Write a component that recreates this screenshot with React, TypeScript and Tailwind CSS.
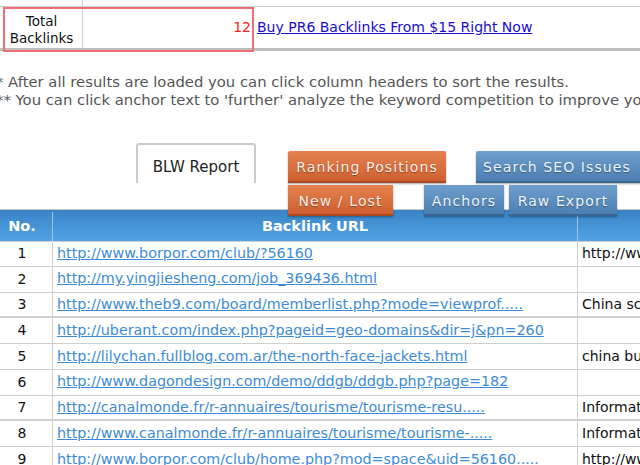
import React from "react";

const rows: { n: number; url: string; anchor: string; thick?: boolean }[] = [
  { n: 1, url: "http://www.borpor.com/club/?56160", anchor: "http://www.borpor.com" },
  { n: 2, url: "http://my.yingjiesheng.com/job_369436.html", anchor: "" },
  { n: 3, url: "http://www.theb9.com/board/memberlist.php?mode=viewprof.....", anchor: "China school uniforms", thick: true },
  { n: 4, url: "http://uberant.com/index.php?pageid=geo-domains&dir=j&pn=260", anchor: "" },
  { n: 5, url: "http://lilychan.fullblog.com.ar/the-north-face-jackets.html", anchor: "china business" },
  { n: 6, url: "http://www.dagondesign.com/demo/ddgb/ddgb.php?page=182", anchor: "" },
  { n: 7, url: "http://canalmonde.fr/r-annuaires/tourisme/tourisme-resu.....", anchor: "Information", thick: true },
  { n: 8, url: "http://www.canalmonde.fr/r-annuaires/tourisme/tourisme-.....", anchor: "Information" },
  { n: 9, url: "http://www.borpor.com/club/home.php?mod=space&uid=56160.....", anchor: "http://www.borpor.com" },
];

const orange =
  "bg-gradient-to-b from-[#e4824f] to-[#cf5f30] border-b-2 border-[#a9491f] text-[#fbeee6] shadow-[0_1px_2px_rgba(0,0,0,0.35)] [text-shadow:0_1px_1px_rgba(0,0,0,0.35)]";
const blue =
  "bg-gradient-to-b from-[#6e9fcc] to-[#4c7fb2] border-b-2 border-[#3a6694] text-[#eef4fa] shadow-[0_1px_2px_rgba(0,0,0,0.35)] [text-shadow:0_1px_1px_rgba(0,0,0,0.35)]";

export default function App() {
  return (
    <div className="relative w-[640px] h-[465px] overflow-hidden bg-white font-['DejaVu_Sans',Verdana,sans-serif] text-[14px]">
      {/* top summary table */}
      <div className="relative">
        <div className="flex h-[7px] border-b border-[#cfcfcf]">
          <div className="w-[83px] shrink-0 border-r border-[#cfcfcf]" />
        </div>
        <div className="flex h-[41px] items-center">
          <div className="w-[83px] shrink-0 h-full border-r border-[#cfcfcf] flex flex-col items-center justify-center pt-[4px] leading-[17px] text-[13.5px] text-[#111] pl-[1px]">
            <span>Total</span>
            <span>Backlinks</span>
          </div>
          <div className="w-[168px] shrink-0 text-right text-[#ff2020]">12</div>
          <a href="#" className="ml-[6px] shrink-0 whitespace-nowrap text-[#1a0dcc] underline">
            Buy PR6 Backlinks From $15 Right Now
          </a>
        </div>
        <div className="h-[3px] bg-[#bdbdbd]" />
        <div className="absolute left-[3px] top-[7px] w-[251px] h-[45px] border-2 border-[#ef6f73] pointer-events-none" />
      </div>

      {/* notes */}
      <div className="mt-[22px] ml-[-4px] leading-[18px] text-[14.8px] text-[#555] whitespace-nowrap">
        <div>* After all results are loaded you can click column headers to sort the results.</div>
        <div>** You can click anchor text to 'further' analyze the keyword competition to improve your rankings.</div>
      </div>

      {/* tabs */}
      <div className="relative z-10 mt-[34px] h-[73px] flex">
        <div className="ml-[136px] shrink-0 w-[120px] h-[40px] pt-[6px] border-2 border-b-0 border-[#cccccc] rounded-t-[3px] flex items-center justify-center text-[#222] text-[15px] bg-white">
          BLW Report
        </div>
        <div className="flex flex-col shrink-0 ml-[32px]">
          <div className="flex mt-[8px] h-[32px]">
            <div className={`w-[158px] shrink-0 pt-[3px] rounded-t-[2px] flex items-center justify-center text-[14px] tracking-[1.1px] whitespace-nowrap ${orange}`}>
              Ranking Positions
            </div>
            <div className={`ml-[30px] shrink-0 w-[170px] pt-[3px] rounded-t-[2px] flex items-center pl-[7px] text-[14px] tracking-[1.1px] whitespace-nowrap ${blue}`}>
              Search SEO Issues
            </div>
          </div>
          <div className="flex mt-[2px] h-[31px]">
            <div className={`w-[105px] shrink-0 pt-[4px] flex items-center justify-center text-[14px] tracking-[1.1px] whitespace-nowrap ${orange}`}>
              New / Lost
            </div>
            <div className={`ml-[31px] shrink-0 w-[80px] pt-[4px] flex items-center justify-center text-[14px] tracking-[1.1px] whitespace-nowrap ${blue}`}>
              Anchors
            </div>
            <div className={`ml-[5px] shrink-0 w-[108px] pt-[4px] flex items-center justify-center text-[14px] tracking-[1.1px] whitespace-nowrap ${blue}`}>
              Raw Export
            </div>
          </div>
        </div>
      </div>

      {/* results table */}
      <div className="mt-[-7px]">
        <div className="flex h-[32px] pt-[2px] border-t border-[#c8c8c8] bg-gradient-to-b from-[#3883c6] to-[#52a4e4] text-white font-bold text-[14.5px]">
          <div className="w-[53px] shrink-0 border-r border-[#9cc6ea] flex items-center justify-center pr-[8px]">No.</div>
          <div className="w-[525px] shrink-0 border-r border-[#9cc6ea] flex items-center justify-center">Backlink URL</div>
          <div className="flex-1" />
        </div>
        {rows.map((r) => (
          <div
            key={r.n}
            className={`flex h-[25.75px] border-[#cfcfcf] ${r.thick ? "border-b-2" : "border-b"} ${r.n === 1 ? "border-t" : ""}`}
          >
            <div className="w-[53px] shrink-0 border-r border-[#cfcfcf] flex items-center justify-center pr-[8px] text-[#111]">
              {r.n}
            </div>
            <div className="w-[525px] shrink-0 border-r border-[#cfcfcf] flex items-center pl-[4px] overflow-hidden whitespace-nowrap">
              <a href="#" className="text-[#3d8bd6] underline text-[14.3px]">
                {r.url}
              </a>
            </div>
            <div className="flex-1 min-w-0 flex items-center pl-[4px] whitespace-nowrap overflow-hidden text-[#111]">
              {r.anchor}
            </div>
          </div>
        ))}
      </div>
    </div>
  );
}
